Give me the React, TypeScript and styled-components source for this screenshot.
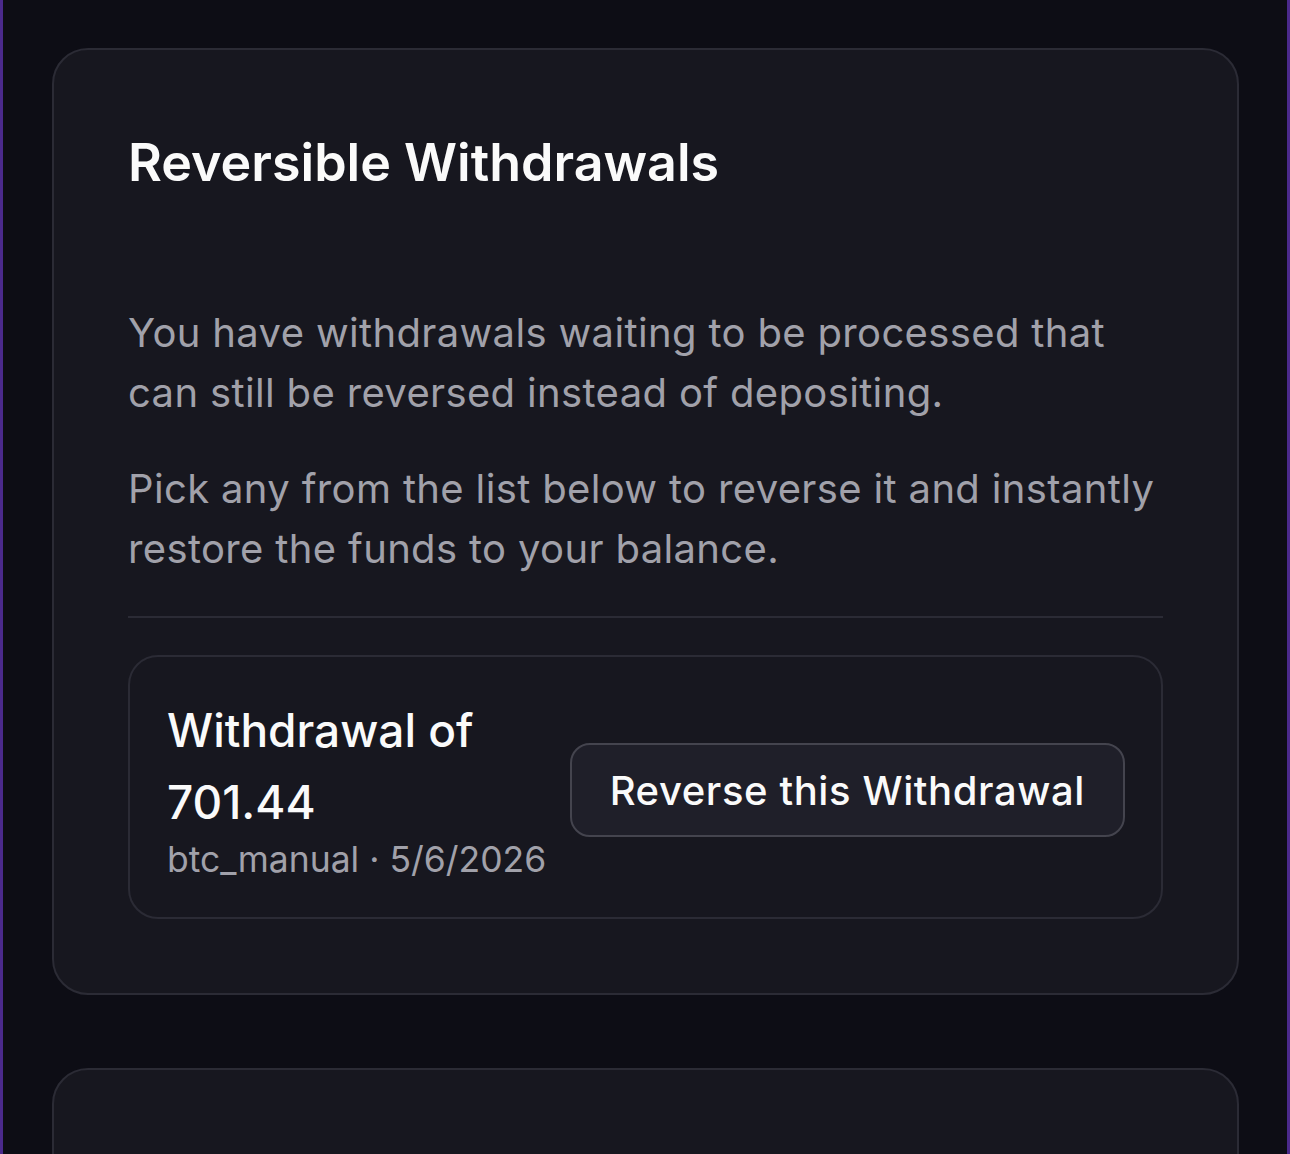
import React from "react";
import styled, { createGlobalStyle } from "styled-components";

const GlobalStyle = createGlobalStyle`
  html, body { margin: 0; padding: 0; background: #0d0d15; }
  body { font-family: Inter, "Noto Sans", "Liberation Sans", sans-serif; -webkit-font-smoothing: antialiased; }
  * { box-sizing: border-box; }
`;

const Page = styled.div`
  height: 1154px;
  background: #0d0d15;
  border-left: 3px solid #4b2a8c;
  border-right: 3px solid #4b2a8c;
  padding: 48px 48px 0 49px;
  display: flex;
  flex-direction: column;
  gap: 73px;
  overflow: hidden;
`;

const Card = styled.section<{ $min?: number }>`
  background: #17171f;
  border: 2px solid #2b2b35;
  border-radius: 36px;
  padding: 80px 74px 74px;
  flex-shrink: 0;
  min-height: ${(p) => (p.$min ? `${p.$min}px` : "auto")};
`;

const Title = styled.h2`
  margin: 0 0 107px;
  font-size: 52px;
  line-height: 66px;
  font-weight: 600;
  color: #fafafa;
`;

const Text = styled.p`
  margin: 0 0 36px;
  font-size: 40px;
  line-height: 60px;
  letter-spacing: 0.35px;
  color: #a1a1aa;
  font-weight: 400;
  &:last-of-type { margin-bottom: 0; }
`;

const Divider = styled.hr`
  border: 0;
  height: 2px;
  background: #2b2b35;
  margin: 37px 0 37px;
`;

const Item = styled.div`
  border: 2px solid #2b2b35;
  border-radius: 30px;
  padding: 37px 36px 31px 37px;
  display: flex;
  align-items: center;
  gap: 24px;
`;

const Info = styled.div`
  flex: 1;
  min-width: 0;
  display: flex;
  flex-direction: column;
`;

const ItemTitle = styled.div`
  font-size: 46px;
  line-height: 72px;
  font-weight: 500;
  color: #fafafa;
`;

const Meta = styled.div`
  font-size: 35.5px;
  line-height: 52px;
  color: #a1a1aa;
  white-space: nowrap;
  margin-top: -4px;
`;

const Button = styled.button`
  flex-shrink: 0;
  font-family: inherit;
  font-size: 40px;
  letter-spacing: 0.6px;
  font-weight: 500;
  color: #fafafa;
  background: #1f1f29;
  border: 2px solid #44444e;
  border-radius: 20px;
  height: 94px;
  padding: 0 38px;
  cursor: pointer;
`;

export default function App() {
  return (
    <>
      <GlobalStyle />
      <Page>
        <Card>
          <Title>Reversible Withdrawals</Title>
          <Text>
            You have withdrawals waiting to be processed that can still be reversed instead of depositing.
          </Text>
          <Text>
            Pick any from the list below to reverse it and instantly restore the funds to your balance.
          </Text>
          <Divider />
          <Item>
            <Info>
              <ItemTitle>Withdrawal of 701.44</ItemTitle>
              <Meta>btc_manual · 5/6/2026</Meta>
            </Info>
            <Button>Reverse this Withdrawal</Button>
          </Item>
        </Card>
        <Card $min={400} />
      </Page>
    </>
  );
}
